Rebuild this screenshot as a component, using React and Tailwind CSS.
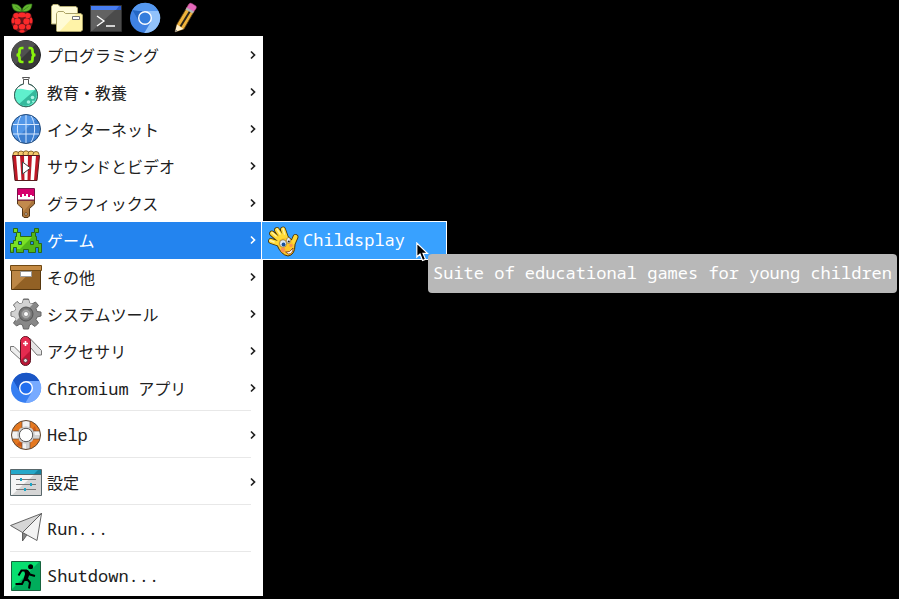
import React from "react";

const FONT = "font-['Noto_Sans_Mono','DejaVu_Sans_Mono','Noto_Sans_CJK_JP',monospace]";

function Svg({ children }) {
  return (
    <svg viewBox="0 0 32 32" className="size-8 shrink-0" aria-hidden="true">
      {children}
    </svg>
  );
}

function RaspberryIcon() {
  const drupes = [
    [16, 13, 3.8, 2.5], [10.2, 13.6, 2.8, 2.6], [21.8, 13.6, 2.8, 2.6],
    [11.6, 19.4, 3.1, 3.1], [20.4, 19.4, 3.1, 3.1], [16, 24.8, 3.3, 2.8],
    [7, 18.6, 1.5, 3], [25, 18.6, 1.5, 3],
    [9.5, 25, 2.4, 2.6], [22.5, 25, 2.4, 2.6], [16, 29.3, 2.8, 1.4],
  ];
  return (
    <Svg>
      <path d="M7 12C10 9 22 9 25 12L27 20C26 26 20 31 16 31S6 26 5 20Z" fill="#65141a" />
      {drupes.map(([cx, cy, rx, ry]) => (
        <ellipse key={`${cx}-${cy}`} cx={cx} cy={cy} rx={rx} ry={ry} fill="#fb2a2a" />
      ))}
      <path d="M16 9.500C16 5 12 1.500 6 2C6 7 9 10.500 16 9.500ZM16 9.500C16 5 20 1.500 26 2C26 7 23 10.500 16 9.500Z" fill="#62b52f" stroke="#2c6a18" strokeWidth=".6" />
      <path d="M9.500 4.500L15 8.500M22.500 4.500L17 8.500" fill="none" stroke="#347a1c" strokeWidth=".7" />
    </Svg>
  );
}

function FoldersIcon() {
  return (
    <Svg>
      <path d="M.5 22V4.500L2 2.500H7L9 4.500H25L26.500 6V22Z" fill="#fffbd8" stroke="#b3ab72" />
      <path d="M5.500 29V11.500L7 9.500H12.500L14.500 11.500H30L31.500 13V28L30 29.500H6Z" fill="#fff3a8" stroke="#aaa268" />
      <path d="M6 29V12L7 10H12L14 12H25L9 29Z" fill="#fffbd5" />
      <path d="M21.500 14.500H28.500V17.500H21.500Z" fill="#fff" stroke="#777" />
    </Svg>
  );
}

function TerminalIcon() {
  return (
    <Svg>
      <path d="M.5 3.500H31.500V29.500H.5Z" fill="#4b4b4b" stroke="#303030" />
      <path d="M1 8H25L2 29H1Z" fill="#626262" />
      <path d="M1 4H31V8H1Z" fill="#2758c8" />
      <path d="M1 4H29L26 8H1Z" fill="#477df0" />
      <path d="M7 14L14 19L7 24M16 24H25" fill="none" stroke="#fff" strokeWidth="1.3" />
    </Svg>
  );
}

function ChromiumIcon({ light }) {
  return (
    <Svg>
      <circle cx="16" cy="16" r="15" fill={light ? "#3f82e3" : "#377ff2"} />
      <path d="M16 16V9H29.500A15 15 0 0 0 3.300 8L9.900 19.500Z" fill={light ? "#5598ef" : "#1a56c5"} />
      <path d="M3.300 8L9.900 19.500L16 9H10Z" fill={light ? "#2467c4" : "#1b58c9"} />
      <path d="M29.400 9H16L22.100 19.500L15.300 31A15 15 0 0 0 29.400 9Z" fill={light ? "#91c2fb" : "#77aaff"} />
      <circle cx="16" cy="16" r="7" fill="#fff" />
      <circle cx="16" cy="16" r="5.600" fill={light ? "#347ddc" : "#226fef"} />
    </Svg>
  );
}

function PencilIcon() {
  return (
    <Svg>
      <path d="M7 30L9 22L21 2L28 6L16 27Z" fill="#efb33b" stroke="#5b3d17" strokeWidth=".8" />
      <path d="M12.500 24.500L23 7.500" stroke="#2b2418" strokeWidth="2" />
      <path d="M18.500 6L21 2Q22 .5 24 1.500L28 4Q29 5 28 6.500L25.500 10Z" fill="#e568bb" stroke="#8c3870" strokeWidth=".5" />
      <path d="M17.500 7.500L18.800 5.500L26 9.500L24.800 11.500Z" fill="#b7b7b7" />
      <path d="M7 30L9 22.500L15.500 27Z" fill="#fff0cb" />
      <path d="M7 30L7.600 27.500L9.500 29Z" fill="#777" />
    </Svg>
  );
}

function CodeIcon() {
  return (
    <Svg>
      <circle cx="16" cy="16" r="14.500" fill="#383838" stroke="#222" />
      <path d="M5.500 25.500A14 14 0 0 1 25.500 5.500Z" fill="#505050" />
      <path d="M13.500 9H12Q9.500 9 9.500 11.500V13Q9.500 16 6.500 16Q9.500 16 9.500 19V20.500Q9.500 23 12 23H13.500M18.500 9H20Q22.500 9 22.500 11.500V13Q22.500 16 25.500 16Q22.500 16 22.500 19V20.500Q22.500 23 20 23H18.500" fill="none" stroke="#8af50c" strokeWidth="2.700" />
    </Svg>
  );
}

function FlaskIcon() {
  return (
    <Svg>
      <path d="M13.500 3.500V8A11.500 11.500 0 1 0 18.500 8V3.500" fill="#fff" stroke="#555" />
      <path d="M12.500 1.500H19.500L18.500 3.500H13.500Z" fill="#fff" stroke="#555" />
      <path d="M6 13.500Q11 12 15 13.500T26 13.500A11.500 11.500 0 1 1 6 13.500Z" fill="#5ff0cd" />
      <path d="M25.500 13.500A11.500 11.500 0 0 1 9 28Z" fill="#35b99c" />
      <circle cx="22.500" cy="21.500" r="1.800" fill="#a6f4e2" />
      <circle cx="18.500" cy="26" r="1.800" fill="#a6f4e2" />
      <circle cx="23" cy="25.500" r="1" fill="#a6f4e2" />
      <path d="M13.500 8A11.500 11.500 0 1 0 18.500 8" fill="none" stroke="#35675d" />
    </Svg>
  );
}

function GlobeIcon() {
  return (
    <Svg>
      <circle cx="16" cy="16" r="14.500" fill="#3d7fd0" />
      <path d="M5.700 26.300A14.500 14.500 0 0 1 26.300 5.700Z" fill="#5297e8" />
      <path d="M16 1V31M2 11.500H30M2 21H30M11.500 2C6 10 6 22 11.500 30M20.500 2C26 10 26 22 20.500 30" fill="none" stroke="#d4e7ff" strokeWidth="1" />
      <circle cx="16" cy="16" r="14.500" fill="none" stroke="#244c7b" />
    </Svg>
  );
}

function PopcornIcon() {
  return (
    <Svg>
      <g fill="#f6cb6d" stroke="#79571f" strokeWidth=".9">
        <circle cx="6" cy="4.500" r="3" />
        <circle cx="11" cy="4" r="3" />
        <circle cx="16" cy="3.800" r="3" />
        <circle cx="21" cy="4" r="3" />
        <circle cx="26" cy="4.500" r="3" />
      </g>
      <path d="M2.500 5.500H29.500L27 30.500H5Z" fill="#fff" />
      <path d="M2.500 5.500H6L8 30.500H5ZM10 5.500H14L14.500 30.500H11.500ZM18 5.500H22L20.500 30.500H17.500ZM26 5.500H29.500L27 30.500H24Z" fill="#bf1826" />
      <path d="M2.500 5.500H29.500L27 30.500H5Z" fill="none" stroke="#541a1e" />
      <path d="M12.500 12V24L20.500 18Z" fill="#fff" stroke="#444" />
    </Svg>
  );
}

function BrushIcon() {
  return (
    <Svg>
      <path d="M7.500 13H24.500V17L19.500 21.500V29L18 30.500H14L12.500 29V21.500L7.500 17Z" fill="#aa743a" stroke="#533719" />
      <path d="M20 17L13 25V21L8 17V14H22Z" fill="#c28a4d" />
      <path d="M7.500 1.500H24.500V13H7.500Z" fill="#fff" stroke="#7a1149" />
      <path d="M8 2H24V9H22V8H20V10H18V7H16V9H14V7H12V10H10V8H8Z" fill="#d5006c" />
      <path d="M15 26H17V28H15Z" fill="#fff" stroke="#533719" strokeWidth=".7" />
    </Svg>
  );
}

function InvaderIcon() {
  return (
    <Svg>
      <path d="M3.500 4.500H7.500V8.500H10.500V12.500H21.500V8.500H24.500V4.500H28.500V8.500H25.500V12.500H26.500V16.500H28.500V19.500H31.500V28.500H28.500V23.500H25.500V28.500H18.500V25.500H13.500V28.500H6.500V23.500H3.500V28.500H.5V19.500H3.500V16.500H5.500V12.500H6.500V8.500H3.500Z" fill="#53b719" stroke="#296719" />
      <path d="M4 5H7V9H10V13H22L10 25H7V23H3V25L1 27V20H4V17H6V13H7V8H4Z" fill="#7ae124" />
      <path d="M8.500 17.500H11.500V20.500H8.500ZM20.500 17.500H23.500V20.500H20.500Z" fill="#288bea" stroke="#235f27" />
    </Svg>
  );
}

function CrateIcon() {
  return (
    <Svg>
      <path d="M1.500 9.500H30.500V28.500H1.500Z" fill="#926125" stroke="#56370f" />
      <path d="M2 10H22L3 28H2Z" fill="#bd8746" />
      <path d="M.5 4.500H31.500V9.500H.5Z" fill="#c48a43" stroke="#704914" />
      <path d="M10.500 10.500H21.500V15.500H10.500Z" fill="#fff" stroke="#9a9a9a" />
    </Svg>
  );
}

function GearIcon() {
  return (
    <Svg>
      <path d="M13.500 1H18.500L19.500 5L22 6L25.500 4L28.500 7.500L26 10.500L27 13.500L31 14V18L27 19L26 21.500L28.500 25L25 28.500L21.500 26L19.500 27L18.500 31H13.500L12.500 27L10 26L6.500 28L3.500 25L6 21.500L5 19L1 18V14L5 13L6 10.500L3.500 7L7 3.500L10 6L12.500 5Z" fill="#888" stroke="#666" />
      <path d="M13.500 2H18.500L19.500 5L22 6L23 6L6 23L5 19L1.500 18V14L5 13L6 10.500L4 7L7 4L10 6L12.500 5Z" fill="#d2d2d2" />
      <circle cx="16" cy="16" r="7" fill="#777" stroke="#555" />
      <circle cx="16" cy="16" r="4.500" fill="#aaa" stroke="#888" />
      <circle cx="16" cy="16" r="2.500" fill="#fff" stroke="#777" strokeWidth=".7" />
    </Svg>
  );
}

function KnifeIcon() {
  return (
    <Svg>
      <path d="M.5 11.500H4L11.500 19V25.500L.5 15.500Z" fill="#eee" stroke="#777" />
      <path d="M20 3.500L31.500 15.500V20H27L20 12Z" fill="#e5e5e5" stroke="#777" />
      <rect x="10.500" y="1.500" width="10" height="29" rx="5" fill="#bd1636" stroke="#59111f" />
      <path d="M11 25V7Q11 2 15 2T20 6V16Z" fill="#e52b50" />
      <path d="M13 8.500H18M15.500 6V11" stroke="#fff" strokeWidth="1.600" />
      <circle cx="15.500" cy="25.500" r="2" fill="#ddd" stroke="#703040" />
    </Svg>
  );
}

function LifebuoyIcon() {
  return (
    <Svg>
      <circle cx="16" cy="16" r="10.800" fill="none" stroke="#e47820" strokeWidth="7.500" />
      <path d="M25 7L20.500 11.500A6.500 6.500 0 0 1 11.500 20.500L6 26A14.500 14.500 0 0 0 25 7Z" fill="#cf5a16" />
      <path d="M12 1.500H20V10H12ZM12 22H20V30.500H12ZM1.500 12H10V20H1.500ZM22 12H30.500V20H22Z" fill="#f2f2f2" />
      <path d="M16 22H20V30H16ZM22 16H30V20H22Z" fill="#d2d2d2" />
      <circle cx="16" cy="16" r="7.800" fill="none" stroke="#ccc" strokeWidth="2" />
      <circle cx="16" cy="16" r="6.700" fill="#fff" stroke="#555" />
      <circle cx="16" cy="16" r="14.500" fill="none" stroke="#5d4632" />
      <path d="M12 2V9M20 2V9M12 23V30M20 23V30M2 12H9M2 20H9M23 12H30M23 20H30" stroke="#6b4f3c" strokeWidth=".7" />
    </Svg>
  );
}

function SettingsIcon() {
  return (
    <Svg>
      <path d="M.5 3.500H31.500V29.500H.5Z" fill="#d5d5d5" />
      <path d="M1 4H29L2 29H1Z" fill="#f5f5f5" />
      <path d="M1 4H31V8H1Z" fill="#17819d" />
      <path d="M1 4H28L24 8H1Z" fill="#25a8c9" />
      <path d="M.5 3.500H31.500V29.500H.5ZM1 8.500H31" fill="none" stroke="#58676b" />
      <path d="M6 13.500H26M6 18.500H26M6 23.500H26" stroke="#777" />
      <path d="M10 12H12V15H10ZM20 17H22V20H20ZM14 22H16V25H14Z" fill="#1aa6c5" />
    </Svg>
  );
}

function PlaneIcon() {
  return (
    <Svg>
      <g stroke="#555" strokeLinejoin="round" strokeWidth=".9">
        <path d="M31.500 .5L.5 12.500L12.500 19.500Z" fill="#d6d6d6" />
        <path d="M31.500 .5L12.500 19.500V28L16.500 22.500Z" fill="#888" />
        <path d="M31.500 .5L12.500 19.500L27 27.500Z" fill="#f3f3f3" />
      </g>
    </Svg>
  );
}

function ExitIcon() {
  return (
    <Svg>
      <path d="M1.500 1.500H30.500V30.500H1.500Z" fill="#00ac5b" />
      <path d="M2 2H29L2 29Z" fill="#08df70" />
      <path d="M1.500 1.500H30.500V30.500H1.500Z" fill="none" stroke="#17643e" />
      <circle cx="20.600" cy="6.800" r="2.500" fill="#000" />
      <path d="M8.500 15.500L11.500 10.500H16.500L20 14.500L25 16M14 20L12 24H5.500M17 19L20 22.500L19 28.500" fill="none" stroke="#000" strokeWidth="2" />
      <path d="M14 10H18L20 13L17 21H13L15 14Z" fill="#000" />
    </Svg>
  );
}

function HandIcon() {
  return (
    <Svg>
      <g strokeLinecap="round" strokeLinejoin="round">
        <path d="M13 19L4 16M14 16L5 8.500M16 14L10 5M19 13L16 4.500M25 20L28.500 12" stroke="#4a3408" strokeWidth="5.800" />
        <path d="M11 15Q20 8 25 15L28 20Q28 30 21 31Q14 30 10 20Z" fill="#f6be1c" stroke="#4a3408" />
        <path d="M13 19L4 16M14 16L5 8.500M16 14L10 5M19 13L16 4.500M25 20L28.500 12" stroke="#ffda38" strokeWidth="4.200" />
        <path d="M12 15Q19 10 24 15L27 20Q27 29 21 30Q15 29 11 20Z" fill="#fdc928" />
        <path d="M3 15.500L7 17M5 7.500L9 11M10 4L13 9M16 3.500L17.500 9" stroke="#fff3a0" strokeWidth="1.500" />
      </g>
      <ellipse cx="16" cy="18.500" rx="3.500" ry="3.800" fill="#dceafa" stroke="#8b6620" strokeWidth=".7" />
      <circle cx="16.500" cy="19.500" r="1.900" fill="#174f9c" />
      <ellipse cx="21.500" cy="15.500" rx="2" ry="3" fill="#e6edf5" stroke="#8b6620" strokeWidth=".6" />
      <circle cx="21.800" cy="16.500" r="1" fill="#222" />
      <circle cx="16" cy="25" r="2.400" fill="#f99350" />
      <circle cx="24" cy="20.500" r="1.700" fill="#f99350" />
      <path d="M18.500 27Q23 28 26 23Q26 29 21.500 29Z" fill="#fff" stroke="#7b341c" strokeWidth=".8" />
    </Svg>
  );
}

function Chevron() {
  return (
    <svg viewBox="0 0 8 10" className="h-2.5 w-2 shrink-0" aria-hidden="true">
      <path d="M2 1.500L5.500 5L2 8.500" fill="none" stroke="currentColor" strokeWidth="1.700" />
    </svg>
  );
}

function Pointer() {
  return (
    <svg viewBox="0 0 13 20" className="absolute top-5 left-[154px] h-5 w-[13px]" aria-hidden="true">
      <path d="M.8 1V15L4 12L6.500 18.500L9.500 17.300L7 11.300H11.500Z" fill="#000" stroke="#fff" strokeWidth="1.200" />
    </svg>
  );
}

const launchers = [
  ["File Manager", FoldersIcon],
  ["Terminal", TerminalIcon],
  ["Chromium", () => <ChromiumIcon light />],
  ["Editor", PencilIcon],
];

const groups = [
  [
    { label: "プログラミング", Icon: CodeIcon, sub: true },
    { label: "教育・教養", Icon: FlaskIcon, sub: true },
    { label: "インターネット", Icon: GlobeIcon, sub: true },
    { label: "サウンドとビデオ", Icon: PopcornIcon, sub: true },
    { label: "グラフィックス", Icon: BrushIcon, sub: true },
    { label: "ゲーム", Icon: InvaderIcon, sub: true, open: true },
    { label: "その他", Icon: CrateIcon, sub: true },
    { label: "システムツール", Icon: GearIcon, sub: true },
    { label: "アクセサリ", Icon: KnifeIcon, sub: true },
    { label: "Chromium アプリ", Icon: ChromiumIcon, sub: true },
  ],
  [{ label: "Help", Icon: LifebuoyIcon, sub: true }],
  [{ label: "設定", Icon: SettingsIcon, sub: true }],
  [{ label: "Run...", Icon: PlaneIcon }],
  [{ label: "Shutdown...", Icon: ExitIcon }],
];

function Label({ children }) {
  const startsLatin = /^[ -~]/.test(children);
  const hasJapanese = /[^ -~]/.test(children);
  const [first, ...rest] = children.split(" ");
  return (
    <span className={`flex-1 text-left whitespace-pre ${hasJapanese ? "pt-0.5" : ""}`}>
      <span className={startsLatin ? "text-[17px]" : "text-base"}>{first}</span>
      {rest.length > 0 && <span className="text-base">{" " + rest.join(" ")}</span>}
    </span>
  );
}

function GamesMenu() {
  return (
    <div className="absolute -top-px left-full z-10 w-[186px] border border-white bg-[#38a1ff]">
      <button className="flex h-[37px] w-full items-center gap-1 pl-[5px] text-[17px] text-white">
        <HandIcon />
        <span className="pb-0.5">Childsplay</span>
      </button>
      <div role="tooltip" className="absolute top-8 left-[166px] flex h-[39px] items-center rounded bg-[#b8b8b8] px-[5px] pb-0.5 text-[17px] whitespace-nowrap text-white">
        Suite of educational games for young children
      </div>
      <Pointer />
    </div>
  );
}

function MenuItem({ item }) {
  const { label, Icon, sub, open } = item;
  return (
    <li className="relative mr-0.5 ml-px">
      <button
        aria-haspopup={sub ? "menu" : undefined}
        className={`flex h-[37px] w-full items-center gap-[5px] pr-1 pb-px pl-[5px] ${open ? "bg-[#2384ef] text-white" : "text-[#202020]"}`}
      >
        <Icon />
        <Label>{label}</Label>
        {sub && <Chevron />}
      </button>
      {open && <GamesMenu />}
    </li>
  );
}

export default function App() {
  return (
    <div lang="ja" className={`min-h-screen overflow-hidden bg-black ${FONT}`}>
      <header className="flex h-9 items-center gap-[13px] pl-1.5">
        <button aria-label="Menu"><RaspberryIcon /></button>
        <div className="flex gap-[7px]">
          {launchers.map(([name, Icon]) => (
            <button key={name} aria-label={name}><Icon /></button>
          ))}
        </div>
      </header>
      <nav className="ml-1 w-[259px] bg-white py-px">
        {groups.map((items, i) => (
          <React.Fragment key={items[0].label}>
            {i > 0 && <hr className="mt-[3px] mr-3 mb-1.5 ml-1.5 border-[#e8e8e8]" />}
            <ul>
              {items.map((item) => <MenuItem key={item.label} item={item} />)}
            </ul>
          </React.Fragment>
        ))}
      </nav>
    </div>
  );
}
